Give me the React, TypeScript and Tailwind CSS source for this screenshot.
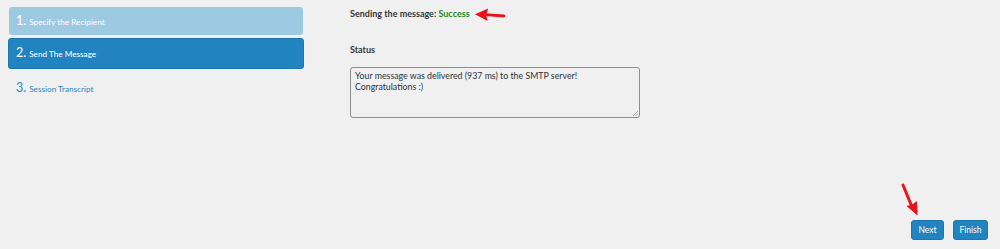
const font = "font-['Lato','Open_Sans',sans-serif]";

const steps = [
  { n: "1.", label: "Specify the Recipient", state: "done" },
  { n: "2.", label: "Send The Message", state: "active" },
  { n: "3.", label: "Session Transcript", state: "todo" },
];

function RedArrow({ className }: { className: string }) {
  // arrow pointing left, tip at (1,8)
  return (
    <svg className={className} viewBox="0 0 34 16" fill="none">
      <path d="M12 8.2 L32 9.6" stroke="#e8131b" strokeWidth="3" strokeLinecap="round" />
      <path d="M1 7.6 L15 1.5 L13 8.4 L14.5 14.8 Z" fill="#e8131b" />
    </svg>
  );
}

export default function App() {
  return (
    <div className={`relative h-[249px] w-full bg-[#f0f0f1] flex flex-col ${font}`}>
      <div className="flex flex-1">
        {/* Steps */}
        <nav className="w-[296px] ml-[8px] pt-[7px] flex flex-col gap-[3px]">
          {steps.map((s) => (
            <div
              key={s.n}
              className={
                s.state === "done"
                  ? "h-[28px] ml-px mr-px rounded-[3px] bg-[#9dc9e2] text-white flex items-center pl-[7px]"
                  : s.state === "active"
                  ? "h-[31px] rounded-[3px] bg-[#2184c0] border border-[#1b76ad] text-white flex items-center pl-[7px]"
                  : "h-[31px] text-[#2a86c2] flex items-center pl-[8px] mt-[1px]"
              }
            >
              <span className="text-[12.5px] leading-none mr-[3px]">{s.n}</span>
              <span className="text-[8.2px] leading-none mt-[2px]">{s.label}</span>
            </div>
          ))}
        </nav>

        {/* Content */}
        <main className="ml-[46px] pt-[8px] flex flex-col text-[#32373c]">
          <div className="flex items-center h-[12px]">
            <span className="text-[9px] font-bold">
              Sending the message: <span className="text-[#1a8a1a]">Success</span>
            </span>
            <RedArrow className="w-[32px] h-[15px] ml-[4px] mt-[1px]" />
          </div>
          <div className="text-[9px] font-bold mt-[24px] h-[12px] leading-[12px]">Status</div>
          <div className="relative mt-[11px] w-[290px] h-[51px] border border-[#8c8f94] rounded-[3px] px-[4px] pt-[2px] text-[8.8px] leading-[11px] text-[#2c3338]">
            <div>Your message was delivered (937 ms) to the SMTP server!</div>
            <div>Congratulations :)</div>
            <svg className="absolute right-[1px] bottom-[1px] w-[6px] h-[6px]" viewBox="0 0 6 6">
              <path d="M1 6 L6 1 M3.5 6 L6 3.5" stroke="#9a9a9a" strokeWidth="0.8" />
            </svg>
          </div>
        </main>
      </div>

      {/* Footer buttons */}
      <div className="flex justify-end gap-[9px] pr-[12px] pb-[9px]">
        <button className="w-[33px] h-[20px] rounded-[3px] bg-[#2184c0] border border-[#1b76ad] text-white text-[8.5px] leading-none">
          Next
        </button>
        <button className="w-[35px] h-[20px] rounded-[3px] bg-[#2184c0] border border-[#1b76ad] text-white text-[8.5px] leading-none">
          Finish
        </button>
      </div>

      {/* Annotation arrow over the Next button */}
      <svg className="absolute left-[898px] top-[180px] w-[24px] h-[38px]" viewBox="0 0 24 38" fill="none">
        <path d="M5 5 L14 27" stroke="#e8131b" strokeWidth="3" strokeLinecap="round" />
        <path d="M19.5 35.5 L8.5 26 L14 24.5 L19 21 Z" fill="#e8131b" />
      </svg>
    </div>
  );
}
